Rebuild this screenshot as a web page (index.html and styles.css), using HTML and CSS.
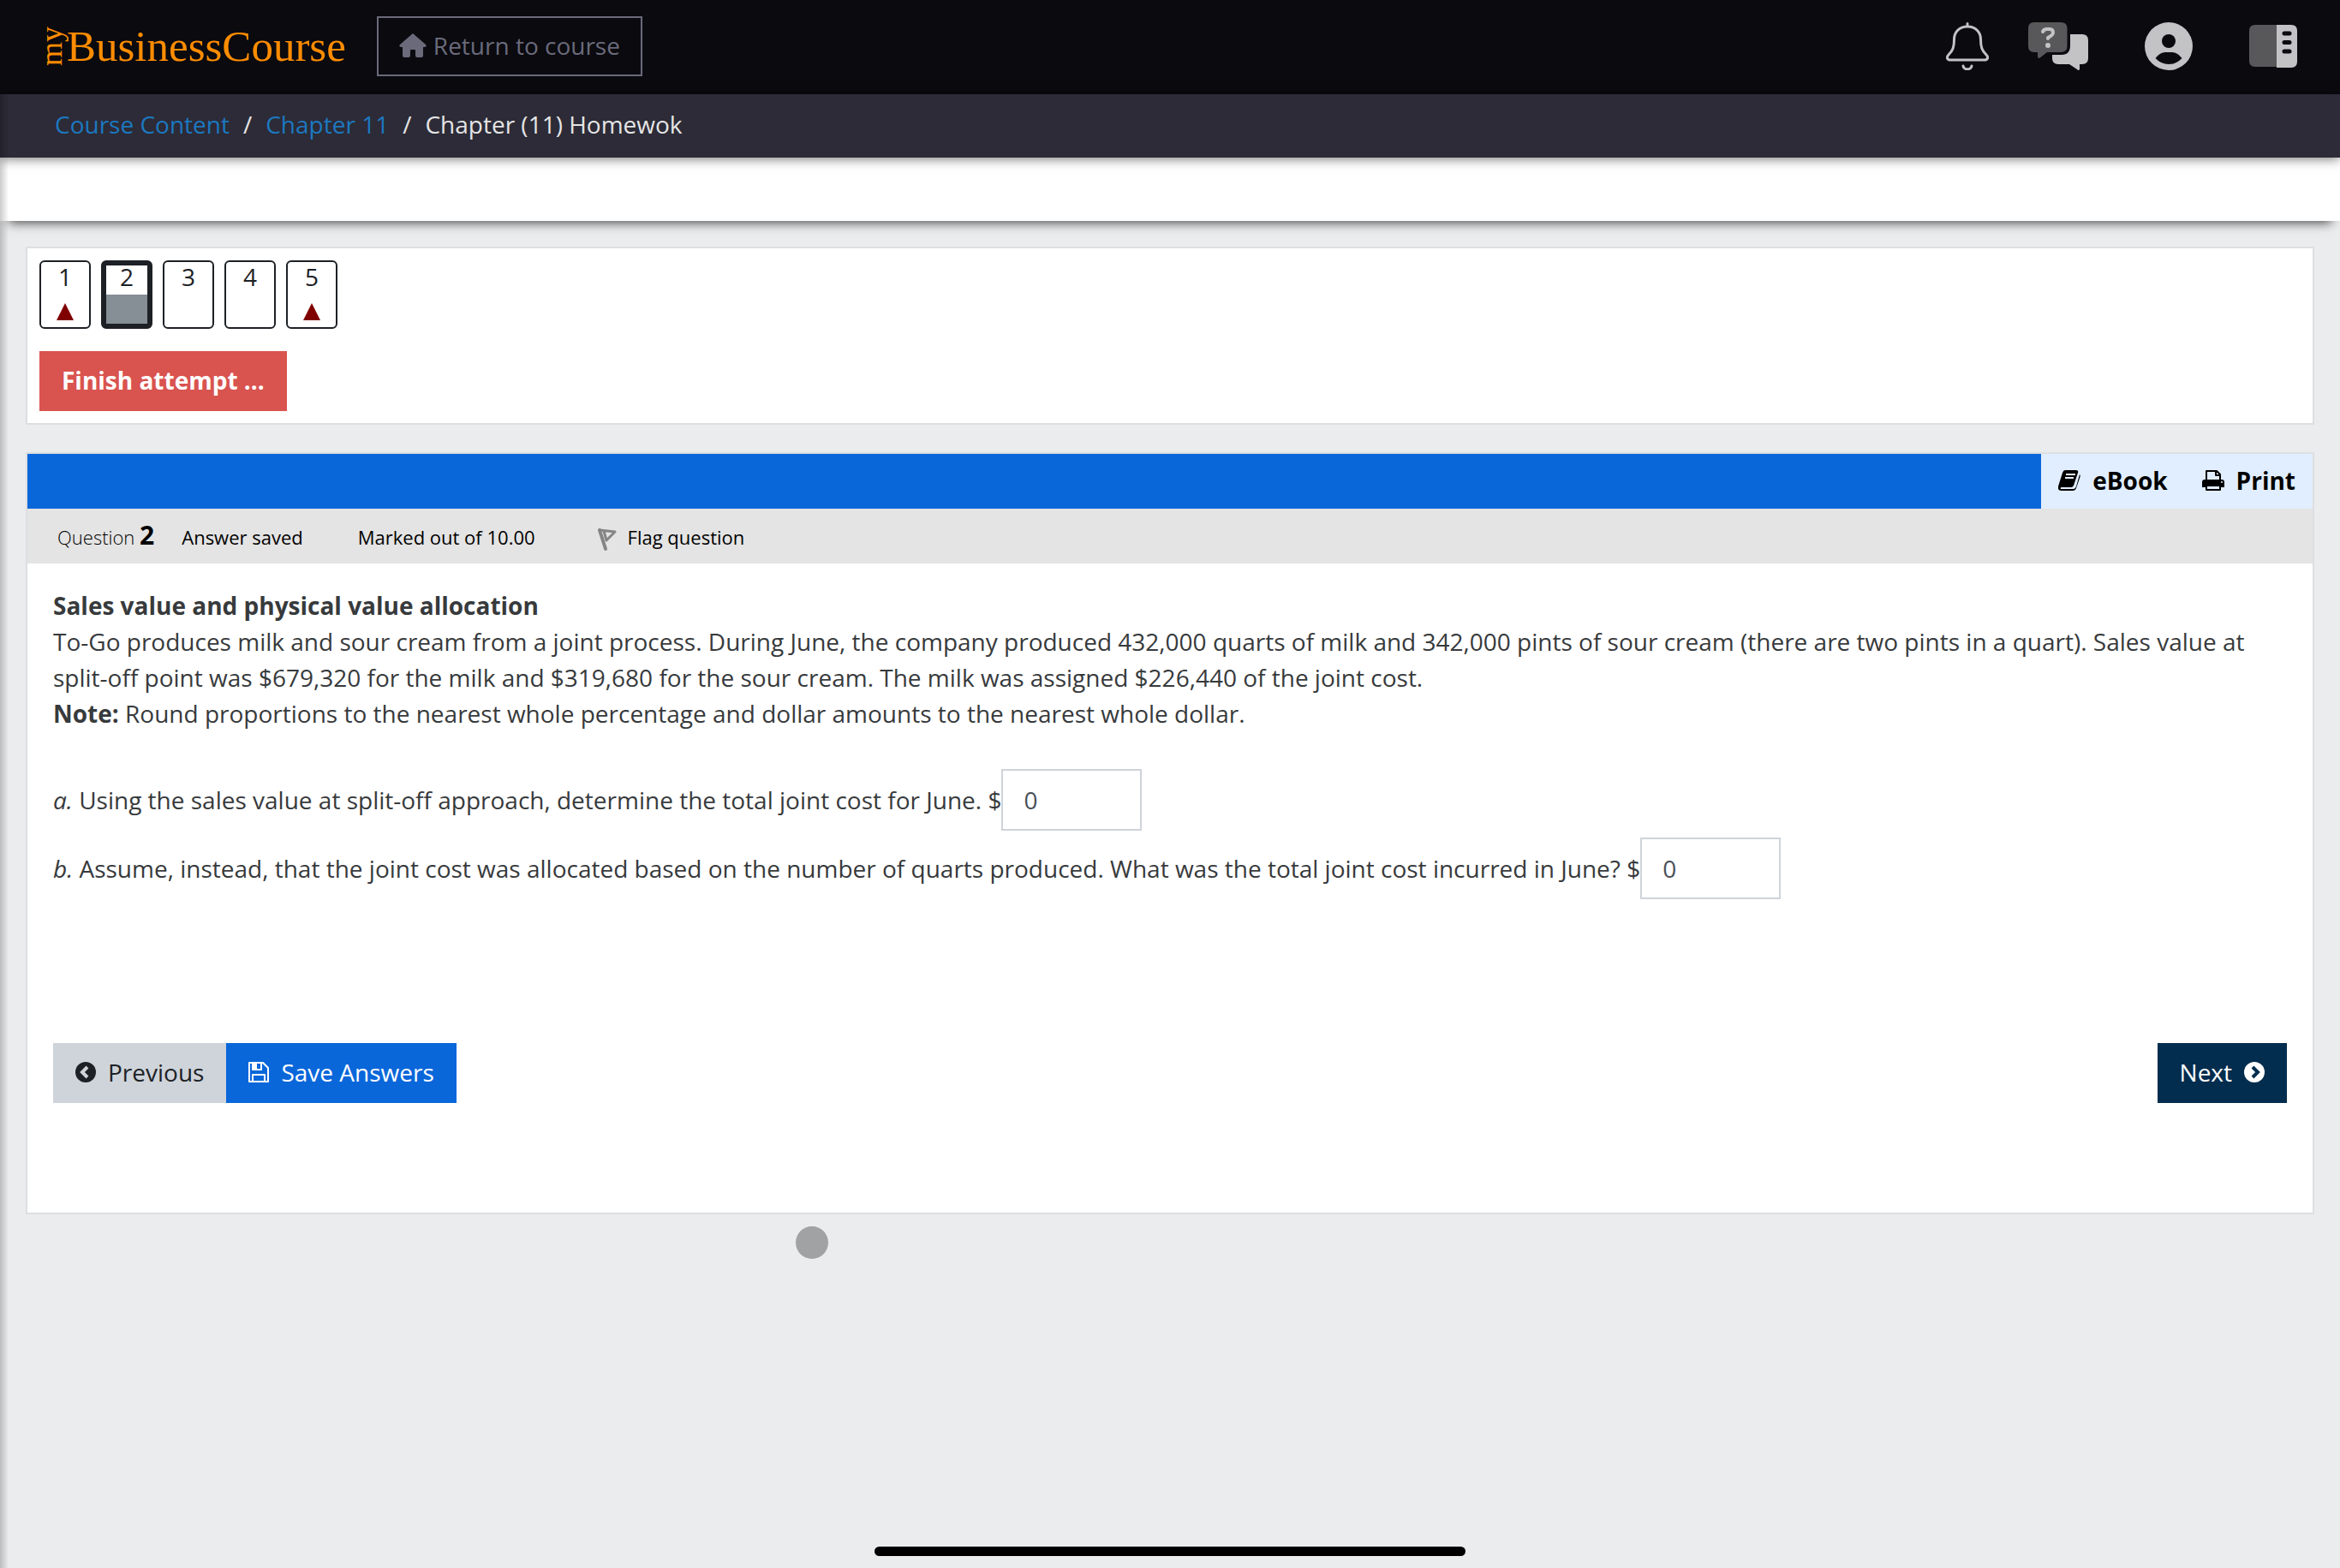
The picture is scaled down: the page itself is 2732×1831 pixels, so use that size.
FILE: index.html
```html
<!DOCTYPE html>
<html lang="en">
<head>
    <meta charset="UTF-8">
    <meta name="viewport" content="width=device-width, initial-scale=1.0">
    <title>Chapter (11) Homewok</title>
    <link rel="stylesheet" href="styles.css">
</head>
<body>

    <header class="topbar">
        <a class="logo" href="#"><span class="logo-my">my</span><span class="logo-name">BusinessCourse</span></a>
        <a class="return-link" href="#">
            <svg class="home-icon" viewBox="0 0 32 28"><path d="M16 0 31 13Q33 16 29 16H28V26Q28 28 26 28H21Q19 28 19 26V20Q19 19 18 19H14Q13 19 13 20V26Q13 28 11 28H6Q4 28 4 26V16H3Q-1 16 1 13Z"/></svg>
            Return to course
        </a>
        <div class="top-icons">
            <button class="icon-btn bell" aria-label="Notifications">
                <svg width="50" height="56" viewBox="0 0 50 56" fill="none" stroke="#c3c2c4" stroke-width="3" stroke-linecap="round">
                    <path d="M25 1.500V5M25 5C15 5 9.500 12 9.500 20C9.500 29 8 33 3 38C0 41 1.500 44 5 44H45C48.500 44 50 41 47 38C42 33 40.500 29 40.500 20C40.500 12 35 5 25 5Z"/>
                    <path d="M20 51C21 56 29 56 30 51"/>
                </svg>
            </button>
            <button class="icon-btn" aria-label="Help">
                <svg width="70" height="56" viewBox="0 0 70 56">
                    <path fill="#c3c2c4" d="M49 14H63Q70 14 70 21V42Q70 49 63 49H60V55Q59 57 57 55L48 49H35Q28 49 28 42V38H39Q49 38 49 27Z"/>
                    <path fill="#58585a" d="M7 0H38Q45.500 0 45.500 7V28Q45.500 35 38 35H22L13 42Q11 42 11 40V35H7Q0 35 0 28V7Q0 0 7 0Z"/>
                    <path fill="none" stroke="#c3c2c4" stroke-width="4" stroke-linecap="round" stroke-linejoin="round" d="M17 11Q18 8 22 8H25Q29 8 29 12Q29 15 23 18V19"/>
                    <circle cx="23" cy="27" r="3" fill="#c3c2c4"/>
                </svg>
            </button>
            <button class="icon-btn" aria-label="Account">
                <svg width="56" height="56" viewBox="0 0 56 56">
                    <circle cx="28" cy="28" r="28" fill="#c3c2c4"/>
                    <circle cx="28" cy="22" r="8" fill="#0a0a0f"/>
                    <path fill="#0a0a0f" d="M12.500 42Q18 35 24 35H32Q38 35 43.500 42Q37 49 28 49Q19 49 12.500 42Z"/>
                </svg>
            </button>
            <button class="icon-btn" aria-label="Side panel">
                <svg width="56" height="50" viewBox="0 0 56 50">
                    <path fill="#58585a" d="M7 0H32V49H7Q0 49 0 42V7Q0 0 7 0Z"/>
                    <path fill="#c3c2c4" d="M32 0H49Q56 0 56 7V43Q56 50 49 50H32Z"/>
                    <path stroke="#0a0a0f" stroke-width="5" stroke-linecap="round" d="M41 10H47M41 20.500H47M41 31H47"/>
                </svg>
            </button>
        </div>
    </header>

    <nav class="breadcrumb">
        <a href="#">Course Content</a>
        <span>/</span>
        <a href="#">Chapter 11</a>
        <span>/</span>
        <span>Chapter (11) Homewok</span>
    </nav>

    <div class="subbar"></div>

    <main class="content">
        <section class="card quiz-nav">
            <div class="question-list">
                <a class="qn" href="#">1<svg class="warn" viewBox="0 0 20 20"><path d="M10 0 20 20H0Z"/></svg></a>
                <a class="qn current" href="#">2</a>
                <a class="qn" href="#">3</a>
                <a class="qn" href="#">4</a>
                <a class="qn" href="#">5<svg class="warn" viewBox="0 0 20 20"><path d="M10 0 20 20H0Z"/></svg></a>
            </div>
            <button class="btn finish">Finish attempt ...</button>
        </section>

        <section class="card question">
            <div class="tools">
                <a href="#">
                    <svg width="26" height="24" viewBox="0 0 26 24">
                        <path d="M8 0H21Q24 0 23 3L18 18Q17 20 15 20H4Q2 20 3 22H18Q20 22 21 19L25 5Q26 6 25.500 8L21 21Q20 24 17 24H4Q-1 24 0 19L5 3Q6 0 8 0Z"/>
                        <path stroke="#e1eeff" stroke-width="2" d="M9 5H20M8 9H18"/>
                    </svg>
                    eBook
                </a>
                <a href="#">
                    <svg width="26" height="24" viewBox="0 0 26 24">
                        <path fill="none" stroke="#000" stroke-width="2" stroke-linejoin="round" d="M5 12V1H17L21 5V12M16 1V6H21"/>
                        <path d="M3 11H23Q26 11 26 14V20H21V17H5V20H0V14Q0 11 3 11Z"/>
                        <path fill="#e1eeff" stroke="#000" stroke-width="2" stroke-linejoin="round" d="M5 18H21V23H5Z"/>
                        <circle cx="23" cy="14" r="1" fill="#e1eeff"/>
                    </svg>
                    Print
                </a>
            </div>

            <div class="info">
                <h3 class="number">Question <b>2</b></h3>
                <span class="state">Answer saved</span>
                <span class="grade">Marked out of 10.00</span>
                <a class="flag" href="#"><svg width="24" height="28" viewBox="0 0 24 28" fill="none" stroke="#858585" stroke-linecap="round" stroke-linejoin="round">
                        <path stroke-width="4" d="M3 3 10 25"/>
                        <path stroke-width="3" d="M3 3 21 5 11 15 8 4"/>
                    </svg>Flag question</a>
            </div>

            <form class="formulation">
                <p class="problem">
                    <strong>Sales value and physical value allocation</strong><br>
                    To-Go produces milk and sour cream from a joint process. During June, the company produced 432,000 quarts of milk and 342,000 pints of sour cream (there are two pints in a quart). Sales value at split-off point was $679,320 for the milk and $319,680 for the sour cream. The milk was assigned $226,440 of the joint cost.<br>
                    <strong>Note:</strong> Round proportions to the nearest whole percentage and dollar amounts to the nearest whole dollar.
                </p>
                <div class="answer">
                    <label for="answer-a"><i>a.</i> Using the sales value at split-off approach, determine the total joint cost for June. $</label>
                    <input id="answer-a" type="text" value="0">
                </div>
                <div class="answer">
                    <label for="answer-b"><i>b.</i> Assume, instead, that the joint cost was allocated based on the number of quarts produced. What was the total joint cost incurred in June? $</label>
                    <input id="answer-b" type="text" value="0">
                </div>
                <div class="actions">
                    <button type="button" class="btn previous">
                        <svg width="24" height="24" viewBox="0 0 24 24"><circle cx="12" cy="12" r="12" fill="#1d2125"/><path d="M14 6 8 12 14 18" fill="none" stroke="#ced4da" stroke-width="4"/></svg>
                        Previous
                    </button>
                    <button type="button" class="btn save">
                        <svg width="24" height="24" viewBox="0 0 24 24" fill="none" stroke="#fff" stroke-width="2" stroke-linejoin="round"><path d="M1 1H17L23 7V23H1ZM5 23V15H19V23M5 1V9H15V1"/><path fill="#fff" stroke="none" d="M5 1H10V9H5Z"/></svg>
                        Save Answers
                    </button>
                    <button type="button" class="btn next">
                        Next
                        <svg width="24" height="24" viewBox="0 0 24 24"><circle cx="12" cy="12" r="12" fill="#fff"/><path d="M10 6 16 12 10 18" fill="none" stroke="#032d4e" stroke-width="4"/></svg>
                    </button>
                </div>
            </form>
        </section>
    </main>

    <div class="edge-shadow"></div>
    <div class="pointer"></div>
    <div class="home-indicator"></div>

</body>
</html>
```
FILE: styles.css
```css
* {
    box-sizing: border-box;
}
body {
    margin: 0;
    min-height: 100vh;
    background-color: #ebecee;
    color: #373a3c;
    font-family: 'Open Sans', sans-serif;
    font-size: 28px;
    line-height: 42px;
}
a {
    text-decoration: none;
}
button,
input {
    font: inherit;
}
svg {
    flex: none;
}
.topbar {
    display: flex;
    align-items: center;
    height: 110px;
    padding: 0 50px 2px 42px;
    background-color: #0a0a0f;
}
.logo {
    display: flex;
    align-items: center;
    margin-right: 36px;
    color: #ff8c00;
    font-family: 'Liberation Serif', serif;
    line-height: 48px;
}
.logo-my {
    writing-mode: vertical-rl;
    transform: rotate(180deg);
    font-size: 36px;
    line-height: 36px;
}
.logo-name {
    font-size: 51px;
}
.return-link {
    display: flex;
    align-items: center;
    gap: 8px;
    height: 70px;
    padding: 0 24px 2px 24px;
    border: 2px solid #6a6a7b;
    color: #6a6a7b;
}
.home-icon {
    width: 32px;
    height: 28px;
    fill: #6a6a7b;
}
.top-icons {
    display: flex;
    align-items: center;
    gap: 66px;
    margin-left: auto;
}
.icon-btn {
    display: flex;
    padding: 0;
    border: 0;
    background: none;
}
.bell {
    margin-right: -20px;
}
.breadcrumb {
    position: relative;
    z-index: 1;
    display: flex;
    gap: 16px;
    height: 74px;
    padding: 14px 64px;
    background-color: #2c2b37;
    color: #e5e5e5;
    box-shadow: 0 2px 12px rgba(0, 0, 0, 0.5);
}
.breadcrumb a {
    color: #1c78c0;
}
.subbar {
    height: 74px;
    background-color: #fff;
    box-shadow: 0 12px 12px -10px rgba(0, 0, 0, 0.7);
}
.content {
    padding: 30px 30px;
}
.card {
    border: 2px solid #dedfe0;
    background-color: #fff;
}
.quiz-nav {
    margin-bottom: 32px;
    padding: 14px;
}
.question-list {
    display: flex;
    gap: 12px;
    margin-bottom: 26px;
}
.qn {
    display: flex;
    flex-direction: column;
    align-items: center;
    justify-content: space-between;
    width: 60px;
    height: 80px;
    padding-bottom: 8px;
    border: 2px solid #1d2125;
    border-radius: 6px;
    color: #1d2125;
    line-height: 34px;
}
.qn.current {
    border-width: 6px;
    background: linear-gradient(#fff 50%, #868e96 50%);
    line-height: 26px;
}
.warn {
    width: 20px;
    height: 20px;
    fill: #800000;
}
.btn {
    display: flex;
    align-items: center;
    gap: 14px;
    height: 70px;
    padding: 0 26px 2px;
    border: 0;
}
.finish {
    background-color: #d9534f;
    color: #fff;
    font-weight: bold;
}
.tools {
    display: flex;
    justify-content: flex-end;
    height: 64px;
    background-color: #0a67da;
}
.tools a {
    display: flex;
    align-items: center;
    gap: 14px;
    padding: 0 20px 2px;
    background-color: #e1eeff;
    color: #000;
    font-weight: bold;
}
.info {
    display: flex;
    align-items: baseline;
    height: 64px;
    padding: 10px 35px;
    background-color: #e4e4e4;
    color: #000;
    font-size: 22px;
}
.number {
    margin: 0 32px 0 0;
    font-size: 22px;
    font-weight: 300;
}
.number b {
    font-size: 30px;
    font-weight: 700;
}
.state {
    margin-right: 64px;
}
.grade {
    margin-right: 72px;
}
.flag {
    color: #000;
}
.flag svg {
    margin-right: 12px;
    vertical-align: middle;
}
.formulation {
    padding: 28px 30px 128px;
}
.problem {
    margin: 0 0 40px;
}
.answer {
    display: flex;
    align-items: center;
    height: 80px;
}
.answer input {
    width: 164px;
    height: 72px;
    padding: 0 24px;
    border: 2px solid #ced4da;
    border-radius: 0;
    color: #495057;
}
.actions {
    display: flex;
    margin-top: 164px;
}
.previous {
    background-color: #ced4da;
    color: #1d2125;
}
.save {
    background-color: #0a67da;
    color: #fff;
}
.next {
    margin-left: auto;
    background-color: #032d4e;
    color: #fff;
}
/* shadow from the closed side drawer */
.edge-shadow {
    position: fixed;
    top: 110px;
    bottom: 0;
    left: 0;
    z-index: 2;
    width: 10px;
    background: linear-gradient(to right, rgba(0, 0, 0, 0.2), rgba(0, 0, 0, 0));
}
.pointer {
    position: fixed;
    top: 1432px;
    left: 929px;
    width: 38px;
    height: 38px;
    border-radius: 50%;
    background-color: #a1a2a4;
}
.home-indicator {
    position: fixed;
    bottom: 14px;
    left: 50%;
    width: 690px;
    height: 11px;
    margin-left: -345px;
    border-radius: 6px;
    background-color: #000;
}
```
